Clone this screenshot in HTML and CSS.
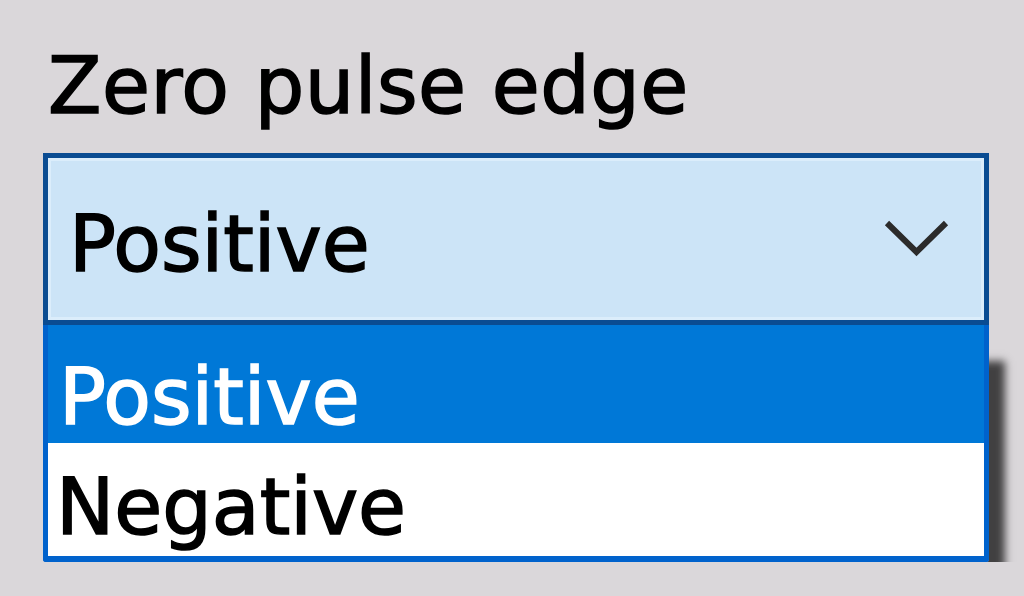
FILE: index.html
```html
<!DOCTYPE html>
<html lang="en">
<head>
  <meta charset="utf-8">
  <title>Zero pulse edge</title>
  <link rel="stylesheet" href="styles.css">
</head>
<body>

  <div class="field">
    <label class="field-label" for="edge">Zero pulse edge</label>

    <div class="combo" id="edge">
      <span class="combo-value">Positive</span>
      <svg class="combo-arrow" width="65" height="37" viewBox="0 0 65 37">
        <polyline points="3,3 32.5,32 62,3" fill="none" stroke="#2b2b2b" stroke-width="6"/>
      </svg>
    </div>

    <ul class="dropdown">
      <li class="option option-selected">Positive</li>
      <li class="option option-last">Negative</li>
    </ul>
  </div>

</body>
</html>
```

FILE: styles.css
```css
body {
  margin: 0;
  background-color: #dad7da;
  font-family: "DejaVu Sans", Verdana, sans-serif;
  font-size: 78px;
  color: #000;
  -webkit-text-stroke: 1.5px currentColor;
}

.field {
  width: 946px;
  margin-left: 43px;
  padding-top: 41px;
}

.field-label {
  display: block;
  line-height: 90px;
  padding-left: 5px;
  margin-bottom: 22px;
  letter-spacing: 0.5px;
}

.combo {
  display: flex;
  justify-content: space-between;
  align-items: flex-start;
  height: 172px;
  padding: 41px 35px 0 21px;
  box-sizing: border-box;
  border: 5px solid #0a4c92;
  background-color: #cce4f7;
  box-shadow: inset 0 0 0 3px #dbedfb;
}

.combo-value {
  line-height: 90px;
}

.combo-arrow {
  margin-top: 21px;
}

.dropdown {
  list-style: none;
  margin: 0;
  padding: 0;
  border: 5px solid #0062cc;
  border-top: none;
  border-bottom-width: 6px;
  border-radius: 0 0 3px 3px;
  box-shadow: 26px 26px 8px -10px rgba(0, 0, 0, 0.7);
}

.option {
  line-height: 78px;
  padding-left: 11px;
  box-sizing: border-box;
}

.option-selected {
  height: 118px;
  padding-top: 33px;
  background-color: #0078d7;
  color: #fff;
}

.option-last {
  height: 113px;
  padding-top: 25px;
  padding-left: 8px;
  background-color: #fff;
}
```
